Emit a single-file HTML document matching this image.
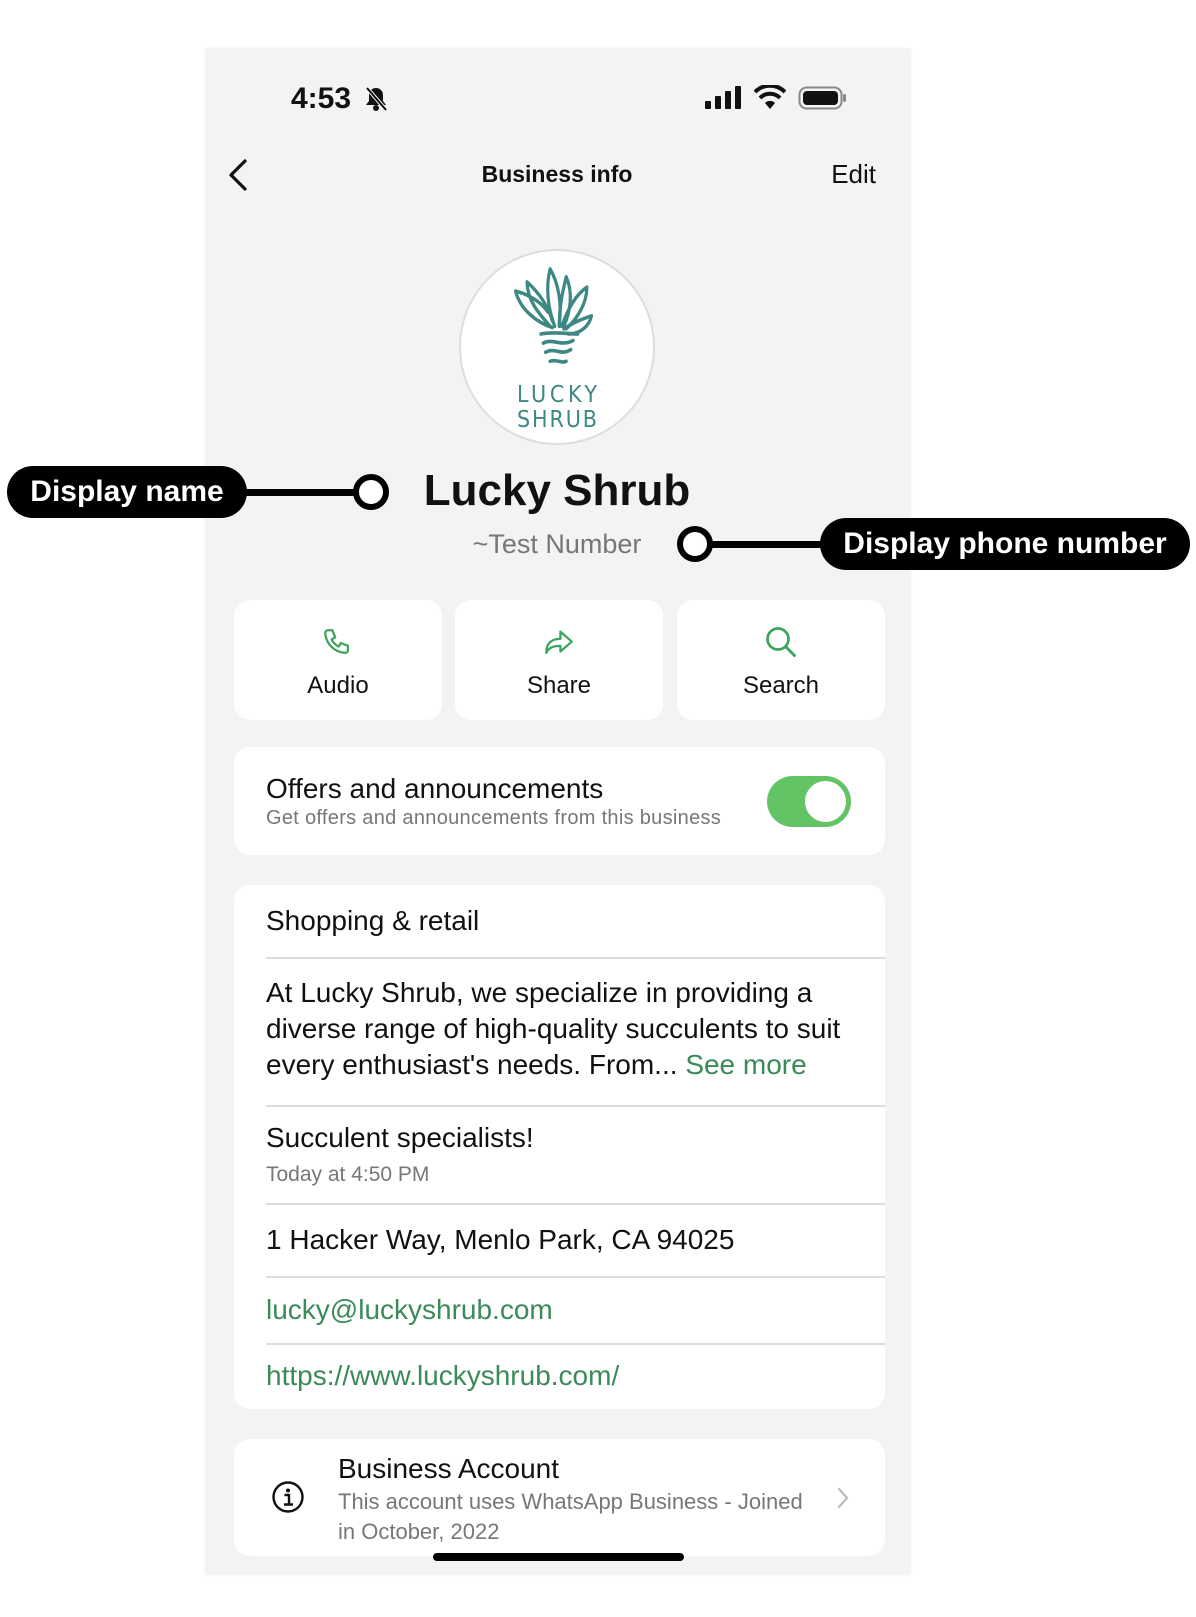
<!DOCTYPE html>
<html><head><meta charset="utf-8"><style>
*{margin:0;padding:0;box-sizing:border-box}
body{width:1196px;height:1617px;background:#fff;position:relative;overflow:hidden;font-family:"Liberation Sans",sans-serif;color:#111}
.a{position:absolute;white-space:nowrap}
.phone{position:absolute;left:206px;top:49px;width:704px;height:1525px;background:#f3f3f3;box-shadow:0 0 3px rgba(0,0,0,.12)}
.card{position:absolute;background:#fff;border-radius:16px}
.sep{position:absolute;height:1.5px;background:#dcdcdc}
.green{color:#3b8a5a}
.pill{position:absolute;background:#000;color:#fff;border-radius:26px;font-weight:bold;font-size:30px;display:flex;align-items:center;justify-content:center}
.dot{position:absolute;width:36px;height:36px;border:6px solid #000;border-radius:50%;background:#fff}
.line{position:absolute;height:7px;background:#000}
</style></head><body>
<div class="phone"></div>

<!-- status bar -->
<div class="a" style="left:291px;top:82px;font-size:30px;font-weight:bold">4:53</div>
<svg class="a" style="left:365px;top:86px" width="22" height="26" viewBox="0 0 22 26"><path d="M11 2c-4 0-7 3-7 7v6l-3 4h20l-3-4V9c0-4-3-7-7-7z" fill="#111"/><circle cx="11" cy="22" r="3" fill="#111"/><path d="M2 2l19 22" stroke="#f3f3f3" stroke-width="4"/><path d="M2 2l19 22" stroke="#111" stroke-width="2"/></svg>
<svg class="a" style="left:705px;top:86px" width="38" height="24"><rect x="0" y="15" width="6" height="8" rx="1" fill="#111"/><rect x="10" y="10" width="6" height="13" rx="1" fill="#111"/><rect x="20" y="5" width="6" height="18" rx="1" fill="#111"/><rect x="30" y="0" width="6" height="23" rx="1" fill="#111"/></svg>
<svg class="a" style="left:754px;top:85px" width="32" height="25" viewBox="0 0 32 25"><path d="M16 24l5-6a7 7 0 0 0-10 0z" fill="#111"/><path d="M6 13a14 14 0 0 1 20 0" stroke="#111" stroke-width="4" fill="none"/><path d="M1 7a21 21 0 0 1 30 0" stroke="#111" stroke-width="4" fill="none"/></svg>
<svg class="a" style="left:798px;top:86px" width="50" height="24"><rect x="1.5" y="1.5" width="42" height="21" rx="7" fill="none" stroke="#888" stroke-width="2"/><rect x="5" y="5" width="35" height="14" rx="4" fill="#111"/><rect x="45" y="8" width="3" height="8" rx="1.5" fill="#888"/></svg>

<!-- nav -->
<svg class="a" style="left:226px;top:158px" width="24" height="34"><path d="M19 3L5 17l14 14" stroke="#111" stroke-width="3.2" fill="none" stroke-linecap="round" stroke-linejoin="round"/></svg>
<div class="a" style="left:457px;top:161px;width:200px;text-align:center;font-size:23px;font-weight:bold">Business info</div>
<div class="a" style="left:776px;top:159px;width:100px;text-align:right;font-size:26px">Edit</div>

<!-- logo -->
<div class="a" style="left:459px;top:249px;width:196px;height:196px;border-radius:50%;background:#fff;border:2px solid #ddd"></div>
<svg class="a" style="left:459px;top:249px" width="196" height="196" viewBox="0 0 196 196">
<g transform="translate(98,20) scale(1.15,1.3) translate(-98,-54)" stroke="#3e8883" stroke-width="2.8" fill="none" stroke-linejoin="round" stroke-linecap="round">
<path d="M94 99c-14-4-28-14-32-28 10 2 22 8 28 16"/>
<path d="M92 98c-10-10-20-20-20-34 10 8 18 18 22 30"/>
<path d="M96 98c-6-14-8-30-4-44 8 12 10 28 8 42"/>
<path d="M100 98c0-18 4-30 6-38 6 12 4 26-2 38"/>
<path d="M102 98c6-14 12-24 22-30 0 12-8 24-18 32"/>
<path d="M104 100c10-6 18-8 24-10-2 8-10 14-20 14"/>
<path d="M84 104c10-2 26 0 32 0"/>
<path d="M86 111c8-4 16 3 26-2"/>
<path d="M88 118c8-4 14 3 22-2"/>
<path d="M92 125c6-2 10 2 14 0"/>
</g>
<text x="58" y="153" textLength="80" lengthAdjust="spacing" font-family="DejaVu Sans Condensed,Liberation Sans Narrow,sans-serif" font-size="23" fill="#3e8883">LUCKY</text>
<text x="58" y="178" textLength="80" lengthAdjust="spacing" font-family="DejaVu Sans Condensed,Liberation Sans Narrow,sans-serif" font-size="23" fill="#3e8883">SHRUB</text>
</svg>

<!-- name -->
<div class="a" style="left:357px;top:466px;width:400px;text-align:center;font-size:44px;font-weight:bold">Lucky Shrub</div>
<div class="a" style="left:407px;top:529px;width:300px;text-align:center;font-size:27px;color:#777">~Test Number</div>

<!-- annotations -->
<div class="pill" style="left:7px;top:466px;width:240px;height:52px">Display name</div>
<div class="line" style="left:240px;top:489px;width:120px"></div>
<div class="dot" style="left:353px;top:474px"></div>
<div class="line" style="left:705px;top:541px;width:120px"></div>
<div class="dot" style="left:677px;top:526px"></div>
<div class="pill" style="left:820px;top:518px;width:370px;height:52px">Display phone number</div>

<!-- action cards -->
<div class="card" style="left:234px;top:600px;width:208px;height:120px"></div>
<div class="card" style="left:455px;top:600px;width:208px;height:120px"></div>
<div class="card" style="left:677px;top:600px;width:208px;height:120px"></div>
<svg class="a" style="left:321px;top:626px" width="34" height="34" viewBox="0 0 24 24"><path d="M5 3h3l2 5-2.5 1.5a11 11 0 0 0 5 5L14 12l5 2v3a2 2 0 0 1-2 2A15 15 0 0 1 3 5a2 2 0 0 1 2-2z" fill="none" stroke="#3da35d" stroke-width="1.6" stroke-linejoin="round"/></svg>
<svg class="a" style="left:541px;top:626px" width="36" height="34" viewBox="0 0 24 24"><path d="M13 4l8 7-8 7v-4c-5 0-8 1-10 5 0-6 3-10 10-10z" fill="none" stroke="#3da35d" stroke-width="1.6" stroke-linejoin="round"/></svg>
<svg class="a" style="left:763px;top:624px" width="36" height="36" viewBox="0 0 24 24"><circle cx="10" cy="10" r="7" fill="none" stroke="#3da35d" stroke-width="1.8"/><path d="M15 15l6 6" stroke="#3da35d" stroke-width="2" stroke-linecap="round"/></svg>
<div class="a" style="left:234px;top:672px;width:208px;text-align:center;font-size:24px">Audio</div>
<div class="a" style="left:455px;top:672px;width:208px;text-align:center;font-size:24px">Share</div>
<div class="a" style="left:677px;top:672px;width:208px;text-align:center;font-size:24px">Search</div>

<!-- offers -->
<div class="card" style="left:234px;top:747px;width:651px;height:108px"></div>
<div class="a" style="left:266px;top:773px;font-size:28px">Offers and announcements</div>
<div class="a" style="left:266px;top:807px;font-size:20px;color:#777;letter-spacing:.3px">Get offers and announcements from this business</div>
<div class="a" style="left:767px;top:776px;width:84px;height:51px;border-radius:26px;background:#63c466"></div>
<div class="a" style="left:801px;top:777px;width:49px;height:49px;border-radius:50%;background:#fff;border:4px solid #63c466"></div>

<!-- info card -->
<div class="card" style="left:234px;top:885px;width:651px;height:524px"></div>
<div class="a" style="left:266px;top:905px;font-size:28px">Shopping &amp; retail</div>
<div class="sep" style="top:957px;left:266px;width:619px"></div>
<div class="a" style="left:266px;top:975px;font-size:28px;line-height:36px;white-space:normal;width:610px">At Lucky Shrub, we specialize in providing a diverse range of high-quality succulents to suit every enthusiast's needs. From... <span class="green">See more</span></div>
<div class="sep" style="top:1105px;left:266px;width:619px"></div>
<div class="a" style="left:266px;top:1122px;font-size:28px">Succulent specialists!</div>
<div class="a" style="left:266px;top:1163px;font-size:21px;color:#777">Today at 4:50 PM</div>
<div class="sep" style="top:1203px;left:266px;width:619px"></div>
<div class="a" style="left:266px;top:1224px;font-size:28px">1 Hacker Way, Menlo Park, CA 94025</div>
<div class="sep" style="top:1276px;left:266px;width:619px"></div>
<div class="a green" style="left:266px;top:1294px;font-size:28px">lucky@luckyshrub.com</div>
<div class="sep" style="top:1343px;left:266px;width:619px"></div>
<div class="a green" style="left:266px;top:1360px;font-size:28px">https://www.luckyshrub.com/</div>

<!-- account card -->
<div class="card" style="left:234px;top:1439px;width:651px;height:117px"></div>
<svg class="a" style="left:271px;top:1480px" width="34" height="34" viewBox="0 0 34 34"><circle cx="17" cy="17" r="14.5" fill="none" stroke="#111" stroke-width="2.4"/><circle cx="17" cy="10.5" r="2" fill="#111"/><path d="M13.5 15h4.5v9M13 24.5h9" stroke="#111" stroke-width="2.4" fill="none"/></svg>
<div class="a" style="left:338px;top:1453px;font-size:28px">Business Account</div>
<div class="a" style="left:338px;top:1487px;font-size:22px;color:#777;line-height:30px">This account uses WhatsApp Business - Joined<br>in October, 2022</div>
<svg class="a" style="left:836px;top:1486px" width="14" height="24"><path d="M3 3l8 9-8 9" stroke="#bbb" stroke-width="2.2" fill="none" stroke-linecap="round"/></svg>
<div class="a" style="left:433px;top:1553px;width:251px;height:8px;border-radius:4px;background:#000"></div>
</body></html>
